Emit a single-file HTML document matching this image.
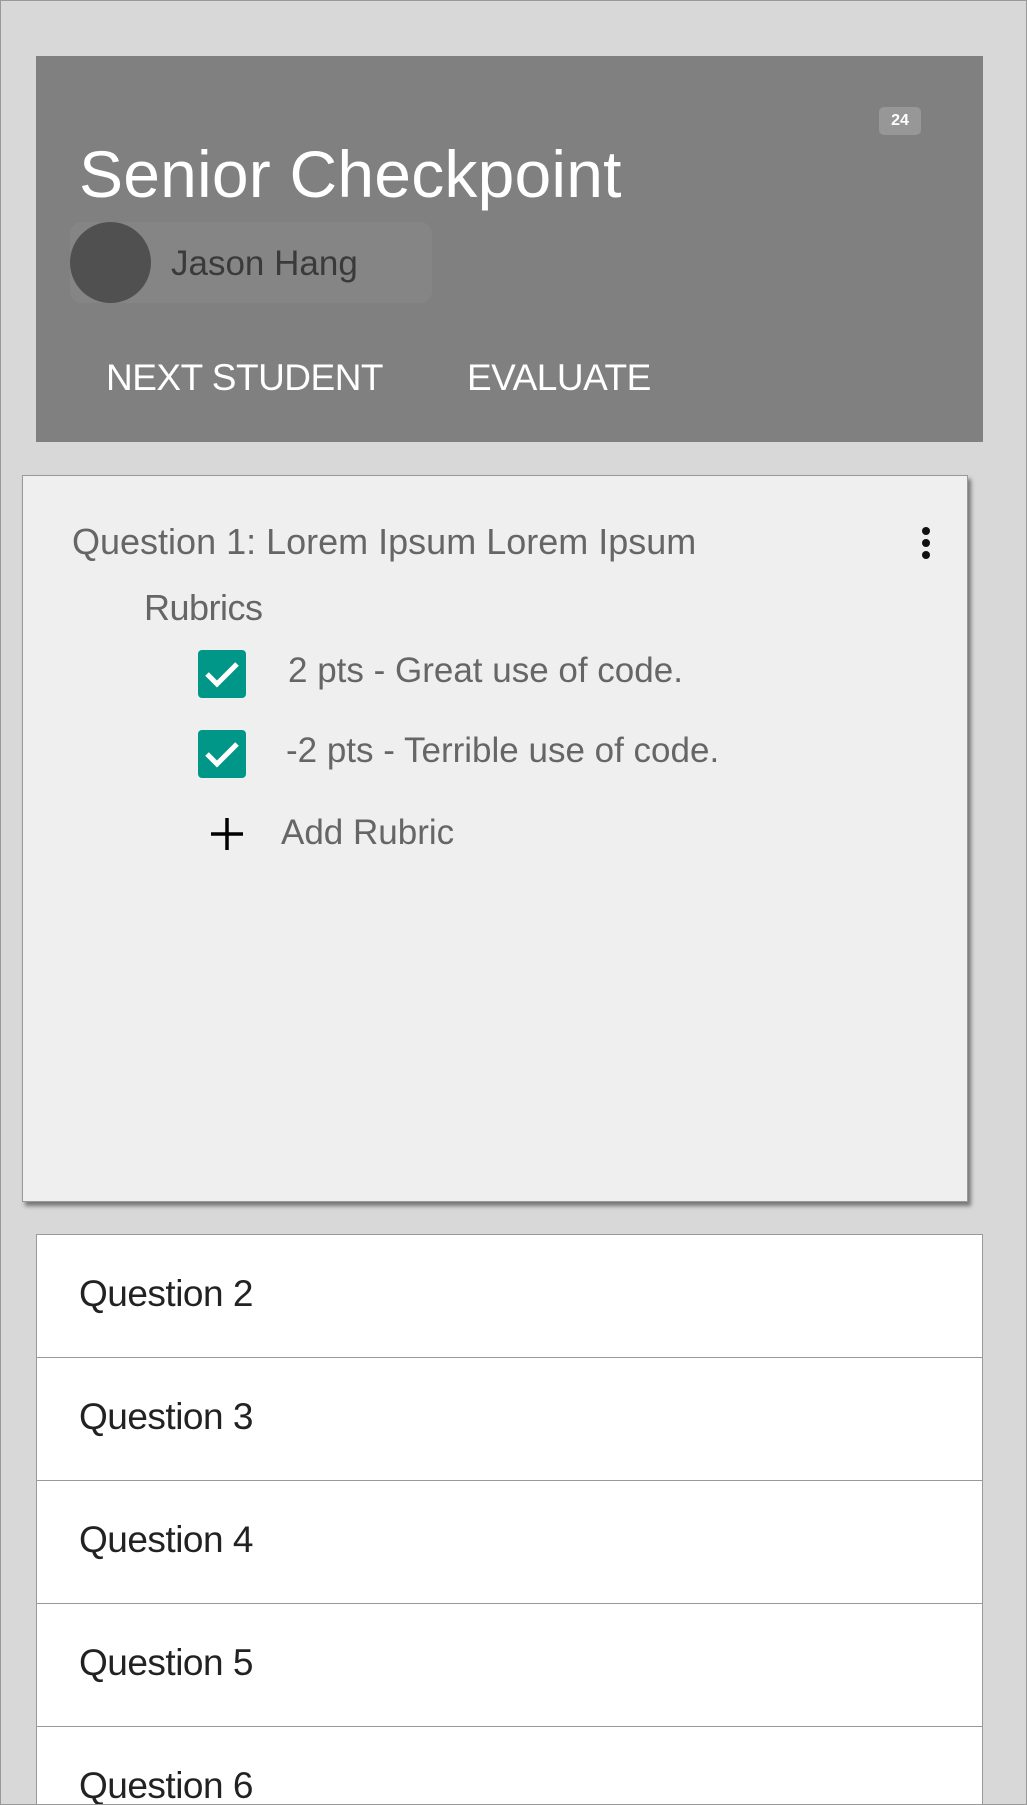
<!DOCTYPE html>
<html style="width:1027px;height:1805px;overflow:hidden"><head><meta charset="utf-8"><style>
*{margin:0;padding:0;box-sizing:border-box}
html,body{width:1027px;height:1805px;overflow:hidden}
body{background:#d8d8d8;font-family:"Liberation Sans",sans-serif}
#w{position:relative;width:1027px;height:1805px;overflow:hidden;border:1px solid #999}
.a{position:absolute;white-space:nowrap}
.hdr{left:35px;top:55px;width:947px;height:386px;background:#808080}
.card{left:21px;top:474px;width:946px;height:727px;background:#efefef;border:1px solid #999;box-shadow:3px 4px 4px rgba(0,0,0,.45)}
.cb{width:48px;height:48px;background:#009688;border-radius:4px}
.row{left:35px;width:947px;height:124px;background:#fff;border:1px solid #999}
.rt{left:42px;top:38px;font-size:37px;color:#222;position:absolute;letter-spacing:-0.5px}
</style></head><body><div id="w">
<div class="a hdr"></div>
<div class="a" style="left:878px;top:106px;width:42px;height:28px;background:#979797;border-radius:5px;color:#fff;font-size:16px;font-weight:bold;text-align:center;line-height:28px">24</div>
<div class="a" style="left:78px;top:135px;font-size:66px;color:#fff;line-height:76px;letter-spacing:0.2px">Senior Checkpoint</div>
<div class="a" style="left:69px;top:221px;width:362px;height:81px;background:#858585;border-radius:12px"></div>
<div class="a" style="left:69px;top:221px;width:81px;height:81px;background:#505050;border-radius:50%"></div>
<div class="a" style="left:170px;top:243px;font-size:35px;color:#3a3a3a;line-height:40px">Jason Hang</div>
<div class="a" style="left:105px;top:355px;font-size:37px;color:#fff;line-height:44px;letter-spacing:-0.5px">NEXT STUDENT</div>
<div class="a" style="left:466px;top:355px;font-size:37px;color:#fff;line-height:44px;letter-spacing:-0.5px">EVALUATE</div>
<div class="a card"></div>
<div class="a" style="left:71px;top:520px;font-size:36px;color:#666;line-height:42px">Question 1: Lorem Ipsum Lorem Ipsum</div>
<div class="a" style="left:921px;top:526px;width:8px;height:8px;border-radius:50%;background:#111;box-shadow:0 12px 0 #111,0 24px 0 #111"></div>
<div class="a" style="left:143px;top:586px;font-size:36px;color:#666;line-height:42px;letter-spacing:-0.5px">Rubrics</div>
<div class="a cb" style="left:197px;top:649px"><svg width="48" height="48" viewBox="0 0 48 48"><path d="M9 24 L19 34 L39 14" stroke="#fff" stroke-width="5" fill="none"/></svg></div>
<div class="a" style="left:287px;top:650px;font-size:35px;color:#666;line-height:40px">2 pts - Great use of code.</div>
<div class="a cb" style="left:197px;top:729px"><svg width="48" height="48" viewBox="0 0 48 48"><path d="M9 24 L19 34 L39 14" stroke="#fff" stroke-width="5" fill="none"/></svg></div>
<div class="a" style="left:285px;top:730px;font-size:35px;color:#666;line-height:40px">-2 pts - Terrible use of code.</div>
<svg class="a" style="left:209px;top:816px" width="34" height="34" viewBox="0 0 34 34"><path d="M17 1V33M1 17H33" stroke="#000" stroke-width="3.5"/></svg>
<div class="a" style="left:280px;top:811px;font-size:35px;color:#666;line-height:42px">Add Rubric</div>
<div class="a row" style="top:1233px"><span class="rt">Question 2</span></div>
<div class="a row" style="top:1356px"><span class="rt">Question 3</span></div>
<div class="a row" style="top:1479px"><span class="rt">Question 4</span></div>
<div class="a row" style="top:1602px"><span class="rt">Question 5</span></div>
<div class="a row" style="top:1725px"><span class="rt">Question 6</span></div>
</div></body></html>
